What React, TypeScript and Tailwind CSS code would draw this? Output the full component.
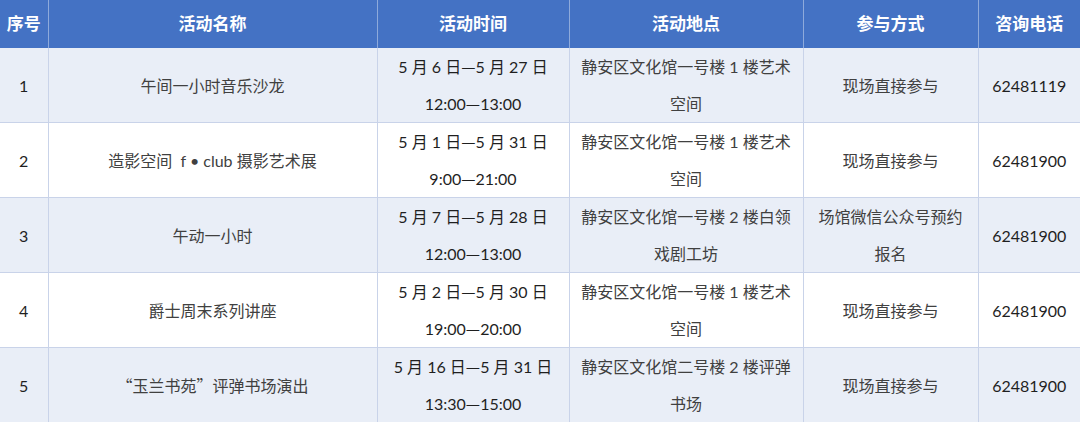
import React from "react";

type Row = {
  no: string;
  name: string;
  time: string[];
  place: string[];
  join: string[];
  phone: string;
};

const rows: Row[] = [
  {
    no: "1",
    name: "午间一小时音乐沙龙",
    time: ["5 月 6 日—5 月 27 日", "12:00—13:00"],
    place: ["静安区文化馆一号楼 1 楼艺术", "空间"],
    join: ["现场直接参与"],
    phone: "62481119",
  },
  {
    no: "2",
    name: "造影空间  f • club 摄影艺术展",
    time: ["5 月 1 日—5 月 31 日", "9:00—21:00"],
    place: ["静安区文化馆一号楼 1 楼艺术", "空间"],
    join: ["现场直接参与"],
    phone: "62481900",
  },
  {
    no: "3",
    name: "午动一小时",
    time: ["5 月 7 日—5 月 28 日", "12:00—13:00"],
    place: ["静安区文化馆一号楼 2 楼白领", "戏剧工坊"],
    join: ["场馆微信公众号预约", "报名"],
    phone: "62481900",
  },
  {
    no: "4",
    name: "爵士周末系列讲座",
    time: ["5 月 2 日—5 月 30 日", "19:00—20:00"],
    place: ["静安区文化馆一号楼 1 楼艺术", "空间"],
    join: ["现场直接参与"],
    phone: "62481900",
  },
  {
    no: "5",
    name: "“玉兰书苑”评弹书场演出",
    time: ["5 月 16 日—5 月 31 日", "13:30—15:00"],
    place: ["静安区文化馆二号楼 2 楼评弹", "书场"],
    join: ["现场直接参与"],
    phone: "62481900",
  },
];

const widths = ["w-[48px]", "w-[329px]", "w-[192px]", "w-[234px]", "w-[175px]", "w-[102px]"];
const headers = ["序号", "活动名称", "活动时间", "活动地点", "参与方式", "咨询电话"];

// full-width punctuation should come from the CJK font
function Txt({ s }: { s: string }) {
  const parts = s.split(/([—“”])/);
  return (
    <>
      {parts.map((p, i) =>
        p === "—" || p === "“" || p === "”" ? (
          <span key={i} className="font-['Noto_Sans_CJK_SC']">
            {p}
          </span>
        ) : (
          <React.Fragment key={i}>{p}</React.Fragment>
        )
      )}
    </>
  );
}

function Lines({ lines }: { lines: string[] }) {
  return (
    <>
      {lines.map((l, i) => (
        <div key={i} className="whitespace-nowrap">
          <Txt s={l} />
        </div>
      ))}
    </>
  );
}

export default function App() {
  return (
    <div
      className="w-[1080px] h-[422px] overflow-hidden bg-white"
      style={{ fontFamily: '"Lato", "Noto Sans CJK SC", sans-serif' }}
    >
      <table className="border-collapse table-fixed w-[1080px]">
        <thead>
          <tr className="h-[48px] bg-[#4472c4]">
            {headers.map((h, i) => (
              <th
                key={h}
                className={`${widths[i]} p-0 text-center text-[17px] font-bold text-white border-l border-[#8eaadb] first:border-l-0`}
              >
                {h}
              </th>
            ))}
          </tr>
        </thead>
        <tbody>
          {rows.map((r, i) => (
            <tr
              key={r.no}
              className={`${i === 0 ? "h-[74px]" : "h-[75px]"} ${i % 2 === 0 ? "bg-[#e9eef7]" : "bg-white"} border-b border-[#c9d3e9] text-[16px] leading-[37px]`}
            >
              <td className="p-0 text-center text-[#1f1f1f]">{r.no}</td>
              <td className="p-0 text-center text-[#404040] border-l border-[#c9d3e9] whitespace-pre">
                <Txt s={r.name} />
              </td>
              <td className="p-0 text-center text-[#1f1f1f] border-l border-[#c9d3e9]">
                <Lines lines={r.time} />
              </td>
              <td className="p-0 text-center text-[#404040] border-l border-[#c9d3e9]">
                <Lines lines={r.place} />
              </td>
              <td className="p-0 text-center text-[#404040] border-l border-[#c9d3e9]">
                <Lines lines={r.join} />
              </td>
              <td className="p-0 text-center text-[#1f1f1f] border-l border-[#c9d3e9]">{r.phone}</td>
            </tr>
          ))}
        </tbody>
      </table>
    </div>
  );
}
